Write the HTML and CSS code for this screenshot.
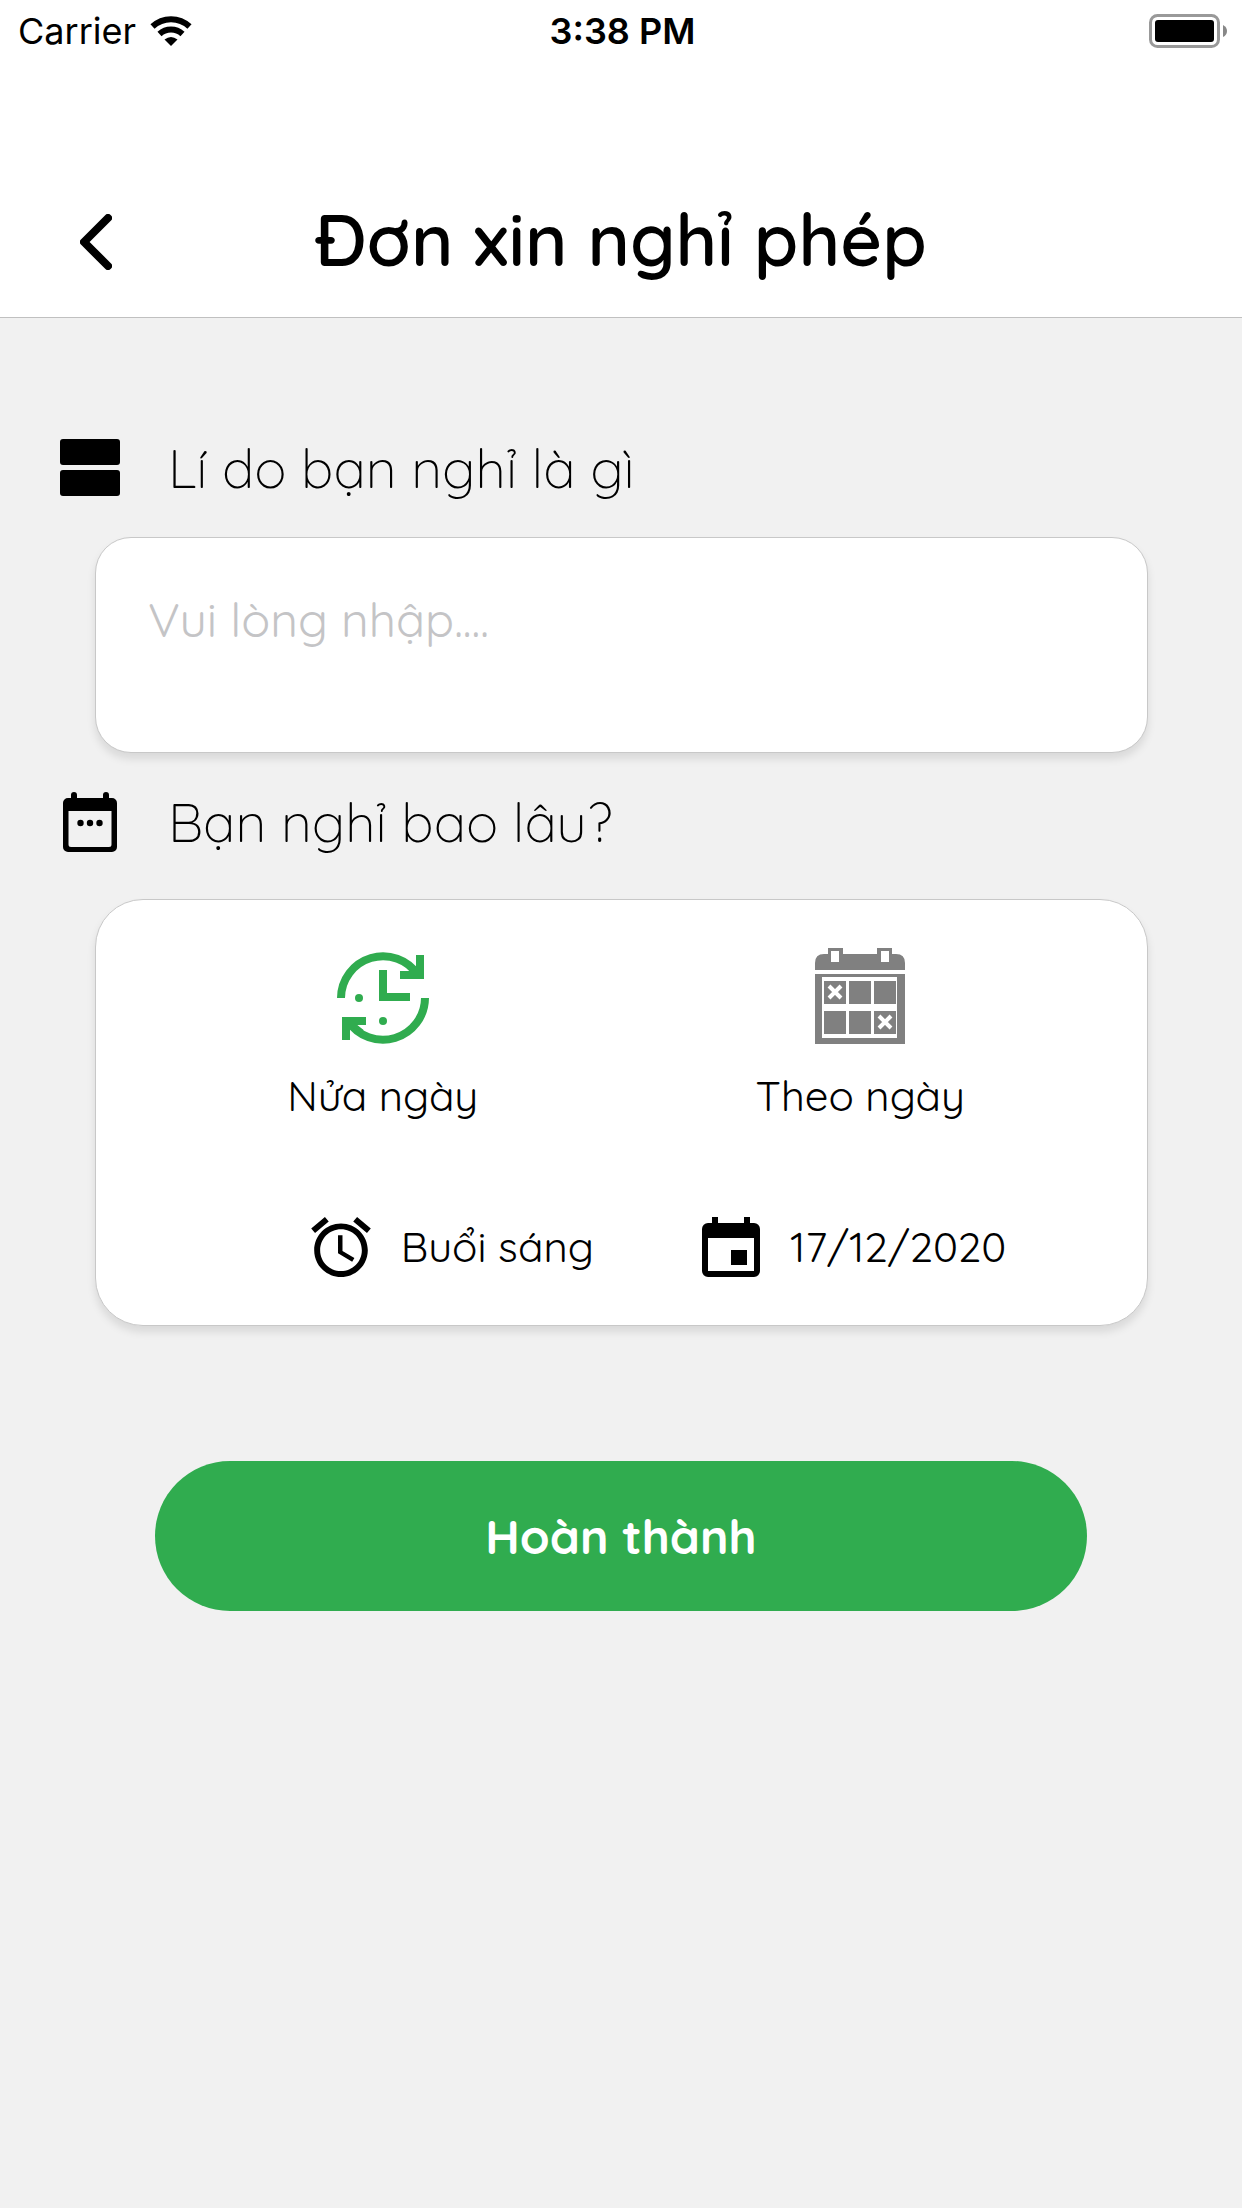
FILE: index.html
```html
<!DOCTYPE html>
<html lang="vi">
<head>
<meta charset="utf-8">
<meta name="viewport" content="width=device-width, initial-scale=1">
<title>Đơn xin nghỉ phép</title>
<link rel="stylesheet" href="styles.css">
</head>
<body>
<div class="status">
  <div class="carrier">
    <span>Carrier</span>
    <svg width="42" height="30" viewBox="0 0 42 30" aria-hidden="true">
      <path d="M2.500 10.500A27 27 0 0 1 39.500 10.500" fill="none" stroke="#000" stroke-width="6"/>
      <path d="M9.500 18A17 17 0 0 1 32.500 18" fill="none" stroke="#000" stroke-width="6"/>
      <path d="M14.500 23.500Q21 18.500 27.500 23.500L21 30Z"/>
    </svg>
  </div>
  <time class="clock">3:38 PM</time>
  <svg class="battery" width="78" height="34" viewBox="0 0 78 34" aria-hidden="true">
    <rect x="1.500" y="1.500" width="68" height="31" rx="7" fill="none" stroke="#999" stroke-width="3"/>
    <rect x="6" y="6" width="59" height="22" rx="3"/>
    <path d="M74 11Q78 13 78 17T74 23Z" fill="#888"/>
  </svg>
</div>
<header class="header">
  <button class="back" type="button" aria-label="Quay lại">
    <svg width="32" height="56" viewBox="0 0 32 56" aria-hidden="true"><path d="M28 4L4 28L28 52" fill="none" stroke="#000" stroke-width="8" stroke-linecap="round" stroke-linejoin="round"/></svg>
  </button>
  <h1 class="title">Đơn xin nghỉ phép</h1>
</header>
<main class="form">
  <label class="question" for="reason">
    <svg width="60" height="58" viewBox="0 0 60 58" aria-hidden="true"><rect width="60" height="26" rx="3"/><rect y="31" width="60" height="26" rx="3"/></svg>
    <span>Lí do bạn nghỉ là gì</span>
  </label>
  <textarea class="card reason" id="reason" placeholder="Vui lòng nhập...."></textarea>
  <h2 class="question">
    <svg width="60" height="60" viewBox="0 0 60 60" aria-hidden="true">
      <path fill-rule="evenodd" d="M11 6V3a3 3 0 0 1 6 0V6H43V3a3 3 0 0 1 6 0V6H52a5 5 0 0 1 5 5V55a5 5 0 0 1-5 5H8a5 5 0 0 1-5-5V11a5 5 0 0 1 5-5ZM8.500 19V52.500a2.500 2.500 0 0 0 2.500 2.500H49a2.500 2.500 0 0 0 2.500-2.500V19Z"/>
      <circle cx="20.500" cy="31" r="3.200"/><circle cx="30" cy="31" r="3.200"/><circle cx="39.500" cy="31" r="3.200"/>
    </svg>
    <span>Bạn nghỉ bao lâu?</span>
  </h2>
  <section class="card duration">
    <div class="options">
      <button class="option" type="button">
        <svg width="92" height="96" viewBox="0 0 92 96" aria-hidden="true">
          <g fill="none" stroke="#30ac4f" stroke-width="8">
            <path d="M4 50A42 42 0 0 1 81 27M88 50A42 42 0 0 1 11 73"/>
            <path d="M83 7V27H63M9 92V73H29M46 22V49H73"/>
          </g>
          <path d="M68 15L82 29M10 72L25 84" stroke="#30ac4f" stroke-width="5"/>
          <g fill="#30ac4f"><circle cx="22" cy="50" r="4"/><circle cx="46" cy="73" r="4"/></g>
        </svg>
        <span>Nửa ngày</span>
      </button>
      <button class="option" type="button">
        <svg width="90" height="96" viewBox="0 0 90 96" aria-hidden="true">
          <g fill="#808080">
            <path d="M0 22V15Q0 6 9 6H13V0H28V6H62V0H77V6H81Q90 6 90 15V22Z"/>
            <path d="M0 26H90V96H0Z"/>
          </g>
          <path d="M16 3H24V14H16ZM66 3H74V14H66ZM7 29H82V90H7Z" fill="#fff"/>
          <path d="M9 33H31V56H9ZM34 33H56V56H34ZM59 33H81V56H59ZM9 63H31V86H9ZM34 63H56V86H34ZM59 63H81V86H59Z" fill="#808080"/>
          <path d="M14 38L26 50M26 38L14 50M64 68L76 80M76 68L64 80" stroke="#fff" stroke-width="4"/>
        </svg>
        <span>Theo ngày</span>
      </button>
    </div>
    <div class="details">
      <button class="detail" type="button">
        <svg width="60" height="60" viewBox="2 1.860 20 20.140" aria-hidden="true"><path d="M22 5.720l-4.600-3.860-1.290 1.530 4.600 3.860L22 5.720zM7.880 3.390L6.600 1.860 2 5.710l1.290 1.530 4.590-3.850zM12.500 8H11v6l4.750 2.850.750-1.230-4-2.370V8zM12 4c-4.970 0-9 4.030-9 9s4.020 9 9 9c4.970 0 9-4.030 9-9s-4.030-9-9-9zm0 16c-3.870 0-7-3.130-7-7s3.130-7 7-7 7 3.130 7 7-3.130 7-7 7z"/></svg>
        <span>Buổi sáng</span>
      </button>
      <button class="detail" type="button">
        <svg width="58" height="60" viewBox="0 0 58 60" aria-hidden="true"><path fill-rule="evenodd" d="M10 6V0H16V6H42V0H48V6H52a6 6 0 0 1 6 6V54a6 6 0 0 1-6 6H6a6 6 0 0 1-6-6V12a6 6 0 0 1 6-6ZM6 21V54H52V21ZM29 33H45V48H29Z"/></svg>
        <span>17/12/2020</span>
      </button>
    </div>
  </section>
  <button class="submit" type="submit">Hoàn thành</button>
</main>
</body>
</html>
```
FILE: styles.css
```css
* { box-sizing: border-box; }

body {
  margin: 0;
  min-height: 100vh;
  background: #f1f1f1;
  color: #000;
  font-family: Quicksand, Lato, "Noto Sans", sans-serif;
}

svg { display: block; flex: none; }

button {
  padding: 0;
  border: 0;
  background: none;
  color: inherit;
  font: inherit;
  cursor: pointer;
}

.status {
  display: grid;
  grid-template-columns: 1fr auto 1fr;
  align-items: center;
  padding: 0 15px 0 18px;
  background: #fff;
  font: 36px/62px Inter, "Liberation Sans", sans-serif;
}

.carrier { display: flex; align-items: center; gap: 14px; }
.clock { font-weight: 600; }
.battery { justify-self: end; }

.header {
  display: grid;
  grid-template-columns: 32px 1fr 32px;
  align-items: center;
  padding: 127px 80px 28px;
  border-bottom: 1px solid #c0c0c0;
  background: #fff;
}

.back { padding-top: 6px; }

.title {
  margin: 0;
  font-size: 72px;
  line-height: 100px;
  font-weight: 600;
  text-align: center;
}

.form {
  display: flex;
  flex-direction: column;
  padding: 117px 94px 60px 95px;
}

.question {
  display: flex;
  align-items: center;
  gap: 48px;
  height: 66px;
  margin: 0 0 36px -35px;
  font-size: 54px;
  line-height: 66px;
  font-weight: 300;
}

.card {
  border: 1px solid #c8c8c8;
  border-radius: 36px;
  background: #fff;
  box-shadow: 0 6px 8px rgba(0, 0, 0, 0.1);
}

.reason {
  display: block;
  width: 100%;
  height: 216px;
  margin-bottom: 36px;
  padding: 49px 52px;
  color: #000;
  font: 400 48px/64px Quicksand, Lato, "Noto Sans", sans-serif;
  resize: none;
  outline: 0;
}

.reason::placeholder { color: #c4c4c6; opacity: 1; }

.duration {
  margin-top: 8px;
  padding: 48px;
  border-radius: 48px;
  font-size: 42px;
  line-height: 60px;
}

.options { display: grid; grid-template-columns: 1fr 1fr; }

.option {
  display: flex;
  flex-direction: column;
  align-items: center;
  gap: 22px;
}

.details {
  display: flex;
  justify-content: center;
  gap: 108px;
  padding: 91px 0 0 74px;
}

.detail { display: flex; align-items: center; gap: 30px; }

.submit {
  height: 150px;
  margin: 135px 61px 0 60px;
  border-radius: 75px;
  background: #30ac4f;
  color: #fff;
  font-size: 48px;
  font-weight: 700;
}
```
